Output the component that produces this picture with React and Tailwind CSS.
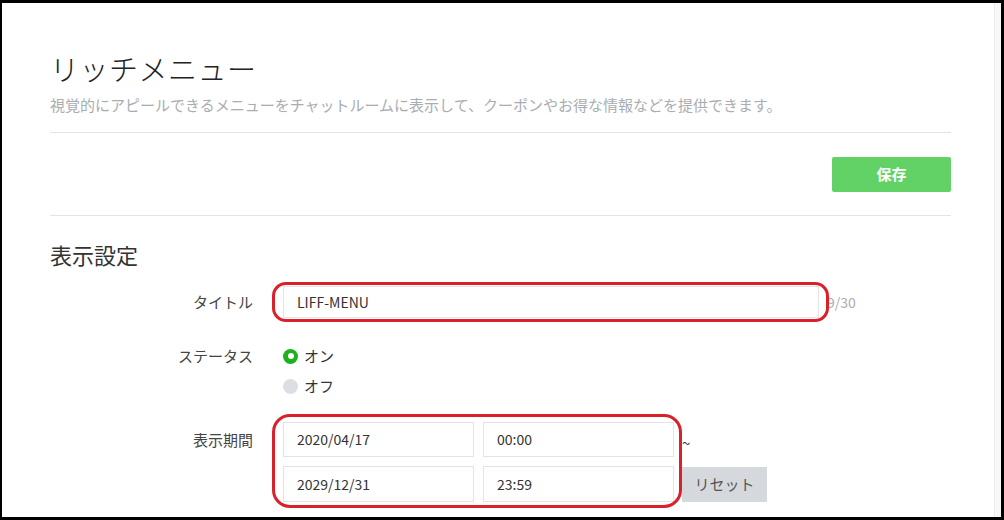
import React from 'react';

const font = { fontFamily: '"Noto Sans CJK JP", "Noto Sans", sans-serif' };

function Field({ value, className = '' }) {
  return (
    <div className={`flex items-center border border-[#e1e3e6] bg-white px-[13px] text-[14px] text-[#333] ${className}`}>
      {value}
    </div>
  );
}

function Radio({ checked, label }) {
  return (
    <div className="flex items-center h-[30px] gap-[6px]">
      {checked ? (
        <span className="w-[15px] h-[15px] rounded-full bg-[#1eb01e] flex items-center justify-center">
          <span className="w-[6px] h-[6px] rounded-full bg-white" />
        </span>
      ) : (
        <span className="w-[15px] h-[15px] rounded-full bg-[#dbdee2]" />
      )}
      <span className="text-[15px] text-[#333]">{label}</span>
    </div>
  );
}

export default function App() {
  return (
    <div
      className="w-[1004px] h-[520px] overflow-hidden bg-white flex border-black border-l-2 border-t-[3px] border-r-[3px] border-b-[3px]"
      style={font}
    >
      <div className="flex-1 pl-[48px] pr-[43px]">
        {/* header */}
        <h1 className="mt-[47px] text-[29px] leading-[36px] font-light text-[#222] tracking-[0.5px]">リッチメニュー</h1>
        <p className="mt-[8px] text-[15px] leading-[22px] text-[#a9adb1]">
          視覚的にアピールできるメニューをチャットルームに表示して、クーポンやお得な情報などを提供できます。
        </p>
        <div className="mt-[16px] border-t border-[#e4e4e4]" />

        <div className="flex justify-end pt-[24px] pb-[23px]">
          <button className="w-[119px] h-[35px] rounded-[2px] bg-[#62d267] text-white text-[15px] font-bold">保存</button>
        </div>
        <div className="border-t border-[#e4e4e4]" />

        {/* 表示設定 */}
        <h2 className="mt-[22px] text-[22px] leading-[32px] text-[#333]">表示設定</h2>

        <div className="mt-[16px] flex items-center relative">
          <div className="w-[233px] pr-[30px] text-right text-[15px] text-[#444]">タイトル</div>
          <Field value="LIFF-MENU" className="w-[536px] h-[32px]" />
          <span className="ml-[8px] text-[14px] text-[#a9adb1]">9/30</span>
          <div className="absolute left-[222px] top-[-4px] w-[557px] h-[40px] rounded-[14px] border-[3px] border-[#d9202b]" />
        </div>

        <div className="mt-[23px] flex">
          <div className="w-[233px] pr-[30px] text-right text-[15px] text-[#444] leading-[30px]">ステータス</div>
          <div className="flex flex-col">
            <Radio checked label="オン" />
            <Radio label="オフ" />
          </div>
        </div>

        <div className="mt-[21px] flex relative">
          <div className="w-[233px] pr-[30px] text-right text-[15px] text-[#444] leading-[35px]">表示期間</div>
          <div className="flex flex-col gap-[9px]">
            <div className="flex gap-[9px]">
              <Field value="2020/04/17" className="w-[191px] h-[35px]" />
              <Field value="00:00" className="w-[191px] h-[35px]" />
            </div>
            <div className="flex gap-[9px]">
              <Field value="2029/12/31" className="w-[191px] h-[36px]" />
              <Field value="23:59" className="w-[191px] h-[36px]" />
            </div>
          </div>
          <div className="flex flex-col ml-[8px]">
            <span className="h-[45px] pt-[6px] text-[15px] text-[#333] leading-[30px]">~</span>
            <button className="w-[85px] h-[35px] bg-[#d5d9dd] text-[15px] text-[#555]">リセット</button>
          </div>
          <div className="absolute left-[222px] top-[-8px] w-[410px] h-[94px] rounded-[18px] border-[3px] border-[#d9202b]" />
        </div>
      </div>
      <div className="w-[7px] bg-[#f8f8f8] border-l border-[#ececec]" />
    </div>
  );
}
